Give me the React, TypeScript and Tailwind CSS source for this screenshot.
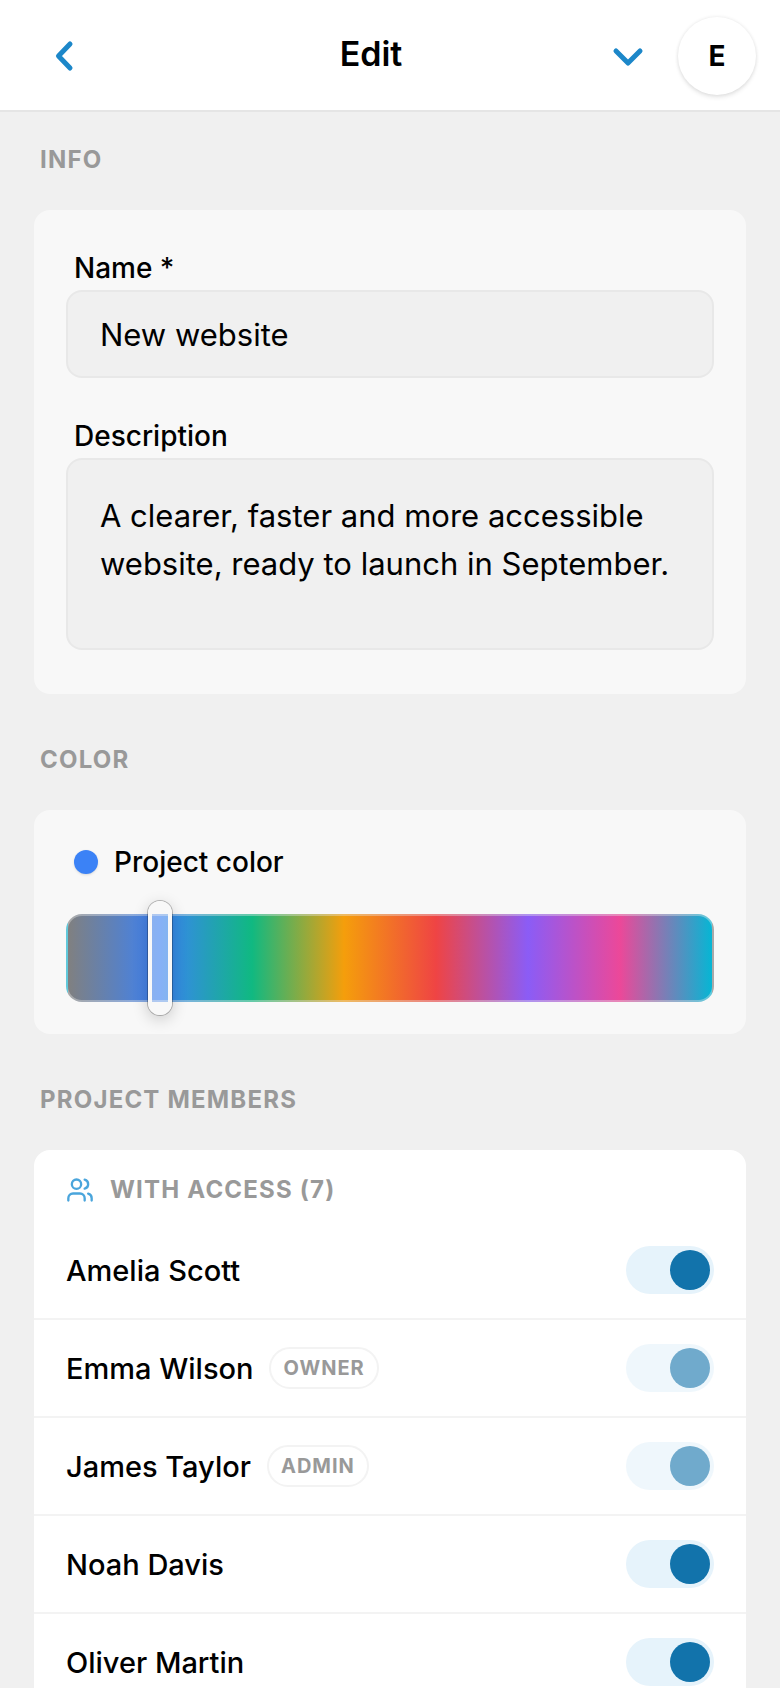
import { useState } from "react";
import type { ReactNode } from "react";
import { Users } from "lucide-react";

type Member = {
  name: string;
  role?: string;
};

const memberCount = 7;

const members: Member[] = [
  { name: "Amelia Scott" },
  { name: "Emma Wilson", role: "Owner" },
  { name: "James Taylor", role: "Admin" },
  { name: "Noah Davis" },
  { name: "Oliver Martin" },
];

const Header = () => {
  return (
    <header className="flex items-center h-28 pt-0.5 pl-[34px] pr-6 bg-white border-b-2 border-[#e5e5e5]">
      <button type="button" aria-label="Back" className="w-[60px] h-14 flex items-center justify-center text-[#1c87c9]">
        <svg viewBox="0 0 16 28" className="w-4 h-7 overflow-visible" fill="none" stroke="currentColor" strokeWidth="5" strokeLinecap="round" strokeLinejoin="round">
          <path d="M14 2L2.5 14 14 26" />
        </svg>
      </button>
      <h1 className="flex-1 pl-12 text-center text-[34px] leading-10 pb-1 font-semibold">Edit</h1>
      <button type="button" aria-label="More options" className="w-14 h-14 pt-0.5 flex items-center justify-center text-[#1c87c9]">
        <svg viewBox="0 0 28 16" className="w-7 h-4 overflow-visible" fill="none" stroke="currentColor" strokeWidth="5" strokeLinecap="round" strokeLinejoin="round">
          <path d="M2 2l12 12L26 2" />
        </svg>
      </button>
      <button
        type="button"
        aria-label="Account"
        className="w-[78px] h-[78px] ml-[22px] rounded-full bg-white text-[28px] font-bold shadow-[0_0_3px_1px_rgba(0,0,0,0.06),0_3px_4px_rgba(0,0,0,0.08)]"
      >
        E
      </button>
    </header>
  );
};

const SectionTitle = ({ children }: { children: ReactNode }) => (
  <h2 className="mb-[30px] px-[6px] text-2xl leading-10 font-bold tracking-wider uppercase text-[#999999]">
    {children}
  </h2>
);

const MemberRow = ({ name, role }: Member) => {
  const [enabled, setEnabled] = useState(true);

  return (
    <li className="border-b-2 border-[#f3f3f3] last:border-b-0">
      <label className="flex items-center h-24 px-8">
        <span className="pt-0.5 text-[29px] leading-10 font-medium">{name}</span>
        {role && (
          <span className="ml-4 px-3 h-[42px] flex items-center rounded-full border-2 border-[#f3f3f3] text-xl font-bold tracking-wider uppercase text-[#999999]">
            {role}
          </span>
        )}
        <input
          type="checkbox"
          role="switch"
          checked={enabled}
          disabled={Boolean(role)}
          onChange={(e) => setEnabled(e.target.checked)}
          className="appearance-none ml-auto w-[88px] h-12 p-1 flex rounded-full bg-[#e6f3fb] disabled:opacity-60 before:content-[''] before:w-10 before:h-10 before:rounded-full before:bg-[#9ca3af] checked:before:ml-10 checked:before:bg-[#1273ab]"
        />
      </label>
    </li>
  );
};

const App = () => {
  const [name, setName] = useState("New website");
  const [description, setDescription] = useState(
    "A clearer, faster and more accessible website, ready to launch in September."
  );
  const [color, setColor] = useState(90);

  return (
    <div className="min-h-screen bg-[#f0f0f0] text-black font-[Inter,sans-serif]">
      <Header />

      <main className="px-[34px] pt-7">
        {/* Info */}
        <section>
          <SectionTitle>Info</SectionTitle>
          <div className="flex flex-col gap-9 px-8 pt-9 pb-11 rounded-2xl bg-[#f8f8f8]">
            <div className="flex flex-col">
              <label htmlFor="name" className="px-2 text-[28px] leading-11 font-medium">
                Name *
              </label>
              <input
                id="name"
                type="text"
                value={name}
                onChange={(e) => setName(e.target.value)}
                className="w-full h-[88px] px-8 text-[31px] rounded-2xl border-2 border-[#e8e8e8] bg-[#f0f0f0]"
              />
            </div>
            <div className="flex flex-col">
              <label htmlFor="description" className="px-2 text-[28px] leading-11 font-medium">
                Description
              </label>
              <textarea
                id="description"
                value={description}
                onChange={(e) => setDescription(e.target.value)}
                className="w-full h-48 px-8 py-8 text-[31px] leading-12 resize-none rounded-2xl border-2 border-[#e8e8e8] bg-[#f0f0f0]"
              />
            </div>
          </div>
        </section>

        {/* Color */}
        <section className="mt-[46px]">
          <SectionTitle>Color</SectionTitle>
          <div className="p-8 rounded-2xl bg-[#f8f8f8]">
            <label htmlFor="color" className="flex items-center gap-4 px-2 text-[28px] leading-10 font-medium">
              <span className="w-6 h-6 rounded-full bg-[#3b82f6] shadow-sm"></span>
              Project color
            </label>
            <input
              id="color"
              type="range"
              min={0}
              max={700}
              value={color}
              onChange={(e) => setColor(Number(e.target.value))}
              className="block appearance-none w-full h-[88px] mt-8 rounded-2xl border-2 border-[#e5e5e5]/40 bg-[linear-gradient(to_right,#808080,#3b82f6,#10b981,#f59e0b,#ef4444,#8b5cf6,#ec4899,#06b6d4)] [&::-webkit-slider-runnable-track]:h-[84px] [&::-webkit-slider-thumb]:appearance-none [&::-webkit-slider-thumb]:w-6 [&::-webkit-slider-thumb]:h-[114px] [&::-webkit-slider-thumb]:mt-[-15px] [&::-webkit-slider-thumb]:rounded-full [&::-webkit-slider-thumb]:border-4 [&::-webkit-slider-thumb]:border-[#f8f8f8] [&::-webkit-slider-thumb]:bg-[#f8f8f8]/40 [&::-webkit-slider-thumb]:shadow-[0_0_0_1px_rgba(0,0,0,0.25),0_4px_16px_rgba(0,0,0,0.2)]"
            />
          </div>
        </section>

        {/* Members */}
        <section className="mt-[46px]">
          <SectionTitle>Project members</SectionTitle>
          <div className="rounded-2xl bg-white">
            <h3 className="flex items-center gap-4 h-[72px] px-8 pt-2 text-2xl font-bold tracking-wider uppercase text-[#999999]">
              <Users className="w-7 h-7 text-[#4aa5dc]" strokeWidth={2} />
              With access ({memberCount})
            </h3>
            <ul>
              {members.map((member) => (
                <MemberRow key={member.name} {...member} />
              ))}
            </ul>
          </div>
        </section>
      </main>
    </div>
  );
};

export default App;
